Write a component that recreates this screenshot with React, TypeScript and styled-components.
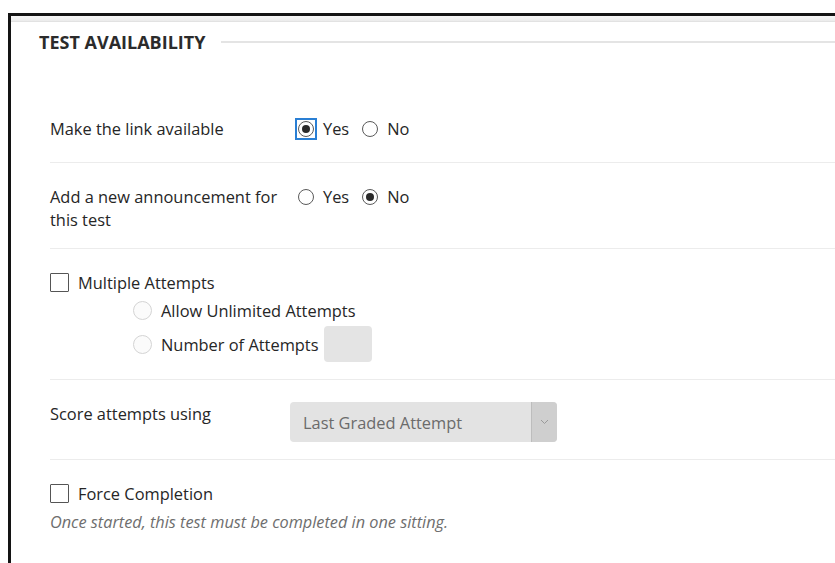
import React from 'react';
import styled, { createGlobalStyle } from 'styled-components';

const GlobalStyle = createGlobalStyle`
  html, body {
    margin: 0;
    padding: 0;
    background: #fff;
    font-family: "Open Sans", "Liberation Sans", sans-serif;
    color: #262626;
  }
`;

const Page = styled.div`
  padding: 13px 0 0 8px;
  height: 563px;
  box-sizing: border-box;
  overflow: hidden;
`;

const Frame = styled.div`
  border-top: 3px solid #141414;
  border-left: 3px solid #141414;
  height: 100%;
  box-sizing: border-box;
`;

const TopBand = styled.div`
  height: 5px;
  background: linear-gradient(#f7f7f7, #ebebeb);
  border-bottom: 1px solid #e2e2e2;
`;

const Fieldset = styled.section`
  padding: 0 0 0 28px;
`;

const Legend = styled.div`
  display: flex;
  align-items: center;
  gap: 16px;
  height: 40px;
`;

const LegendTitle = styled.h2`
  margin: 0;
  font-size: 18px;
  font-weight: 700;
  color: #2b2b2b;
`;

const LegendRule = styled.div`
  flex: 1;
  height: 2px;
  background: #e4e4e4;
`;

const Rows = styled.div`
  margin-left: 11px;
  padding-top: 33px;
`;

const Row = styled.div<{ $last?: boolean; $tall?: boolean }>`
  display: flex;
  align-items: flex-start;
  padding: 22px 0 ${p => (p.$tall ? '22px' : '17px')};
  border-bottom: ${p => (p.$last ? 'none' : '1px solid #ececec')};
  font-size: 16.4px;
  line-height: 23px;
`;

const Label = styled.div`
  width: 240px;
  flex-shrink: 0;
`;

const Choices = styled.div`
  display: flex;
  align-items: center;
  gap: 10px;
  margin-left: 5px;
  height: 23px;
`;

const Choice = styled.label`
  display: flex;
  align-items: center;
  gap: 6px;
`;

const RadioBox = styled.span<{ $focus?: boolean }>`
  width: 22px;
  height: 22px;
  display: flex;
  align-items: center;
  justify-content: center;
  box-sizing: border-box;
  border: 2px solid ${p => (p.$focus ? '#2a7fd4' : 'transparent')};
`;

const RadioCircle = styled.span<{ $on?: boolean }>`
  width: 16px;
  height: 16px;
  border-radius: 50%;
  border: 1px solid #5a5a5a;
  box-sizing: border-box;
  display: flex;
  align-items: center;
  justify-content: center;
  background: #fff;

  &::after {
    content: '';
    display: ${p => (p.$on ? 'block' : 'none')};
    width: 8px;
    height: 8px;
    border-radius: 50%;
    background: #2a2a2a;
  }
`;

const CheckBox = styled.span`
  width: 19px;
  height: 19px;
  box-sizing: border-box;
  border: 1.5px solid #555;
  border-radius: 1px;
  background: #fff;
  flex-shrink: 0;
`;

const CheckLine = styled.label`
  display: flex;
  align-items: center;
  gap: 9px;
`;

const Stack = styled.div`
  display: flex;
  flex-direction: column;
`;

const SubOptions = styled.div`
  display: flex;
  flex-direction: column;
  gap: 4px;
  margin: 5px 0 0 83px;
`;

const SubOption = styled.label`
  display: flex;
  align-items: center;
  gap: 9px;
`;

const DimRadio = styled.span`
  width: 19px;
  height: 19px;
  border-radius: 50%;
  border: 1px solid #d4d4d4;
  background: #fbfbfb;
  box-sizing: border-box;
`;

const NumberInput = styled.span`
  width: 48px;
  height: 36px;
  border-radius: 4px;
  background: #e4e4e4;
  margin-left: -4px;
`;

const Select = styled.div`
  display: flex;
  width: 267px;
  height: 40px;
  border-radius: 4px;
  background: #e3e3e3;
  overflow: hidden;
`;

const SelectText = styled.span`
  flex: 1;
  display: flex;
  align-items: center;
  padding-left: 13px;
  color: #6b6b6b;
`;

const SelectArrow = styled.span`
  width: 25px;
  display: flex;
  align-items: center;
  justify-content: center;
  background: #cfcfcf;
  border-left: 1px solid #bdbdbd;
`;

const Note = styled.p`
  margin: 6px 0 0;
  font-size: 16.3px;
  font-style: italic;
  color: #6e6e6e;
`;

const Radio: React.FC<{ on?: boolean; focus?: boolean }> = ({ on, focus }) => (
  <RadioBox $focus={focus}>
    <RadioCircle $on={on} />
  </RadioBox>
);

const App: React.FC = () => {
  return (
    <>
      <GlobalStyle />
      <Page>
        <Frame>
          <TopBand />
          <Fieldset>
            <Legend>
              <LegendTitle>TEST AVAILABILITY</LegendTitle>
              <LegendRule />
            </Legend>
            <Rows>
              <Row $tall>
                <Label>Make the link available</Label>
                <Choices>
                  <Choice><Radio on focus />Yes</Choice>
                  <Choice><Radio />No</Choice>
                </Choices>
              </Row>
              <Row>
                <Label>Add a new announcement for this test</Label>
                <Choices>
                  <Choice><Radio />Yes</Choice>
                  <Choice><Radio on />No</Choice>
                </Choices>
              </Row>
              <Row>
                <Stack>
                  <CheckLine><CheckBox />Multiple Attempts</CheckLine>
                  <SubOptions>
                    <SubOption><DimRadio />Allow Unlimited Attempts</SubOption>
                    <SubOption><DimRadio />Number of Attempts<NumberInput /></SubOption>
                  </SubOptions>
                </Stack>
              </Row>
              <Row>
                <Label>Score attempts using</Label>
                <Select>
                  <SelectText>Last Graded Attempt</SelectText>
                  <SelectArrow>
                    <svg width="9" height="6" viewBox="0 0 9 6">
                      <path d="M1 1l3.5 3.5L8 1" fill="none" stroke="#9a9a9a" strokeWidth="1" />
                    </svg>
                  </SelectArrow>
                </Select>
              </Row>
              <Row $last>
                <Stack>
                  <CheckLine><CheckBox />Force Completion</CheckLine>
                  <Note>Once started, this test must be completed in one sitting.</Note>
                </Stack>
              </Row>
            </Rows>
          </Fieldset>
        </Frame>
      </Page>
    </>
  );
};

export default App;
